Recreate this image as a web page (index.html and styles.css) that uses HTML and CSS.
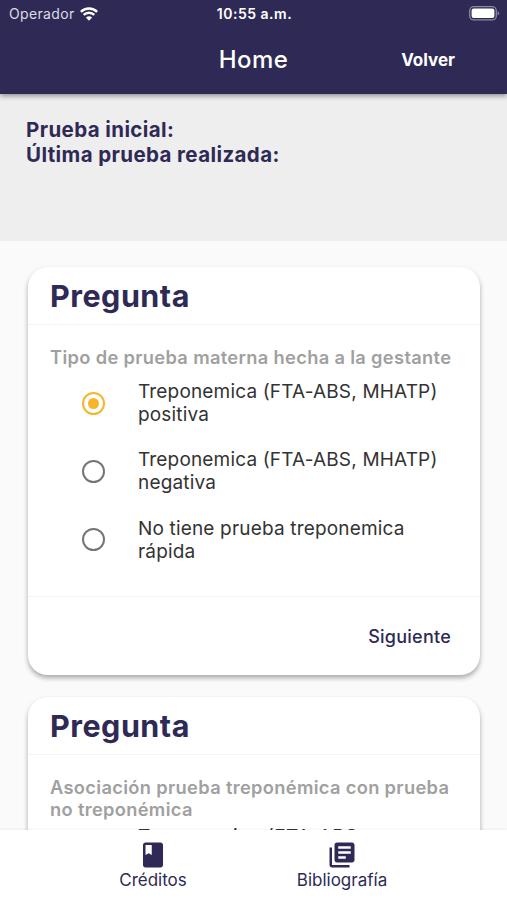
FILE: index.html
```
<!DOCTYPE html>
<html lang="es">
<head>
  <meta charset="UTF-8">
  <meta name="viewport" content="width=device-width, initial-scale=1.0">
  <title>Home</title>
  <link rel="stylesheet" href="styles.css">
</head>
<body>
  <div class="app">
    <header class="header">
      <div class="status-bar">
        <div class="carrier">
          <span>Operador</span>
          <svg class="wifi" viewBox="0 0 18 14">
            <path d="M.9 4.9A11.500 11.500 0 0 1 17.100 4.900" />
            <path d="M3.700 7.900A7.500 7.500 0 0 1 14.300 7.900" />
            <path class="wifi-dot" d="M9 13.800L5.900 10.600A4.500 4.500 0 0 1 12.100 10.600Z" />
          </svg>
        </div>
        <span class="time">10:55 a.m.</span>
        <div class="battery-wrap">
          <svg class="battery" viewBox="0 0 31 15">
            <rect class="battery-shell" x=".7" y=".7" width="26.6" height="13.2" rx="4" />
            <rect class="battery-level" x="2.6" y="2.6" width="22.8" height="9.4" rx="2" />
            <path class="battery-tip" d="M28.6 5.2Q30.2 5.8 30.2 7.3T28.6 9.4Z" />
          </svg>
        </div>
      </div>
      <div class="nav-bar">
        <h1 class="title">Home</h1>
        <button class="back">Volver</button>
      </div>
    </header>

    <section class="summary">
      <p>Prueba inicial:</p>
      <p>Última prueba realizada:</p>
    </section>

    <main class="content">
      <div class="card">
        <h2 class="card-title">Pregunta</h2>
        <div class="card-body">
          <p class="question">Tipo de prueba materna hecha a la gestante</p>
          <ul class="options">
            <li class="option">
              <span class="radio checked"></span>
              <span class="label">Treponemica (FTA-ABS, MHATP)<br>positiva</span>
            </li>
            <li class="option">
              <span class="radio"></span>
              <span class="label">Treponemica (FTA-ABS, MHATP)<br>negativa</span>
            </li>
            <li class="option">
              <span class="radio"></span>
              <span class="label">No tiene prueba treponemica<br>rápida</span>
            </li>
          </ul>
        </div>
        <div class="card-footer">
          <button class="next">Siguiente</button>
        </div>
      </div>

      <div class="card">
        <h2 class="card-title">Pregunta</h2>
        <div class="card-body">
          <p class="question">Asociación prueba treponémica con prueba<br>no treponémica</p>
          <ul class="options compact">
            <li class="option">
              <span class="label">Treponemica (FTA-ABS</span>
            </li>
          </ul>
        </div>
      </div>
    </main>

    <nav class="tab-bar">
      <a class="tab">
        <svg class="tab-icon" viewBox="0 0 24 24">
          <path d="M18 2H6c-1.100 0-2 .9-2 2v16c0 1.100.9 2 2 2h12c1.100 0 2-.9 2-2V4c0-1.100-.9-2-2-2zM6 4h5v8l-2.500-1.500L6 12V4z" />
        </svg>
        <span>Créditos</span>
      </a>
      <a class="tab">
        <svg class="tab-icon" viewBox="0 0 24 24">
          <path d="M4 6H2v14c0 1.100.9 2 2 2h14v-2H4V6zm16-4H8c-1.100 0-2 .9-2 2v12c0 1.100.9 2 2 2h12c1.100 0 2-.9 2-2V4c0-1.100-.9-2-2-2zm-1 9H9V9h10v2zm-4 4H9v-2h6v2zm4-8H9V5h10v2z" />
        </svg>
        <span>Bibliografía</span>
      </a>
    </nav>
  </div>
</body>
</html>
```
FILE: styles.css
```
* {
  margin: 0;
  padding: 0;
  box-sizing: border-box;
}

body {
  font-family: Inter, 'Liberation Sans', sans-serif;
  background: #fafafa;
  color: #2e2a55;
}

button {
  font: inherit;
  color: inherit;
  background: none;
  border: none;
}

.app {
  display: flex;
  flex-direction: column;
  height: 900px;
  overflow: hidden;
}

.header {
  flex: none;
  position: relative;
  z-index: 1;
  height: 94px;
  background: #2e2a55;
  color: white;
  box-shadow: 0 2px 5px rgba(0, 0, 0, 0.4);
}

.status-bar {
  display: grid;
  grid-template-columns: 1fr auto 1fr;
  align-items: center;
  height: 27px;
  padding: 0 7px 0 9px;
  font-size: 14px;
}

.carrier {
  display: flex;
  align-items: center;
  gap: 5px;
  color: #dddce6;
  letter-spacing: 0.35px;
}

.wifi {
  width: 18px;
  height: 14px;
  fill: none;
  stroke: white;
  stroke-width: 2.4;
}

.wifi-dot {
  fill: white;
  stroke: none;
}

.time {
  font-weight: 600;
  letter-spacing: 0.5px;
}

.battery-wrap {
  display: flex;
  justify-content: flex-end;
}

.battery {
  width: 31px;
  height: 15px;
}

.battery-shell {
  fill: none;
  stroke: #8c89a3;
  stroke-width: 1.3;
}

.battery-level {
  fill: white;
}

.battery-tip {
  fill: #8c89a3;
}

.nav-bar {
  display: grid;
  grid-template-columns: 1fr auto 1fr;
  align-items: center;
  height: 65px;
  padding-right: 52px;
  padding-left: 52px;
}

.title {
  grid-column: 2;
  font-size: 24px;
  font-weight: 500;
  letter-spacing: 0.4px;
}

.back {
  justify-self: end;
  font-size: 17px;
  font-weight: 700;
}

.summary {
  flex: none;
  height: 147px;
  padding: 23px 26px;
  background: #eeeeee;
  font-size: 20.5px;
  font-weight: 650;
  line-height: 25px;
  letter-spacing: 0.4px;
}

.content {
  flex: 1;
  min-height: 0;
  padding: 26px 27px 0 28px;
  overflow: hidden;
}

.card {
  margin-bottom: 22px;
  background: white;
  border-radius: 20px;
  box-shadow: 0 3px 5px rgba(0, 0, 0, 0.32);
}

.card-title {
  height: 58px;
  padding-left: 22px;
  font-size: 30.5px;
  font-weight: 650;
  line-height: 58px;
  letter-spacing: 0.5px;
  border-bottom: 1px solid #f3f3f3;
}

.card-body {
  padding: 21px 22px 0;
}

.question {
  color: #a0a0a0;
  font-size: 18.3px;
  font-weight: 600;
  line-height: 22px;
  letter-spacing: 0.33px;
}

.options {
  list-style: none;
  margin-top: 12px;
  padding-bottom: 11px;
}

/* long answers start right under the question */
.options.compact {
  margin-top: -7px;
}

.compact .option {
  padding-left: 88px;
}

.compact .label {
  letter-spacing: 0.5px;
}

.option {
  display: flex;
  align-items: center;
  gap: 33px;
  height: 46px;
  margin-bottom: 22.4px;
  padding-left: 32px;
}

.radio {
  flex: none;
  display: flex;
  align-items: center;
  justify-content: center;
  width: 23px;
  height: 23px;
  border: 2.5px solid #757575;
  border-radius: 50%;
}

.radio.checked {
  border-color: #f7b52c;
}

.radio.checked::after {
  content: '';
  width: 11px;
  height: 11px;
  background: #f7b52c;
  border-radius: 50%;
}

.label {
  color: #333333;
  font-size: 19px;
  line-height: 23px;
  letter-spacing: 0.17px;
  white-space: nowrap;
}

.card-footer {
  display: flex;
  align-items: center;
  justify-content: flex-end;
  height: 79px;
  padding-right: 29px;
  border-top: 1px solid #f3f3f3;
}

.next {
  font-size: 18px;
  font-weight: 500;
  letter-spacing: 0.25px;
}

.tab-bar {
  flex: none;
  display: flex;
  justify-content: center;
  position: relative;
  z-index: 1;
  height: 70px;
  padding-top: 10px;
  padding-right: 12px;
  background: white;
  box-shadow: 0 -1px 2px rgba(0, 0, 0, 0.05);
}

.tab {
  display: flex;
  flex-direction: column;
  align-items: center;
  width: 189px;
  font-size: 17px;
  line-height: 20px;
}

.tab-icon {
  width: 30px;
  height: 30px;
  fill: #2e2a55;
}
```
